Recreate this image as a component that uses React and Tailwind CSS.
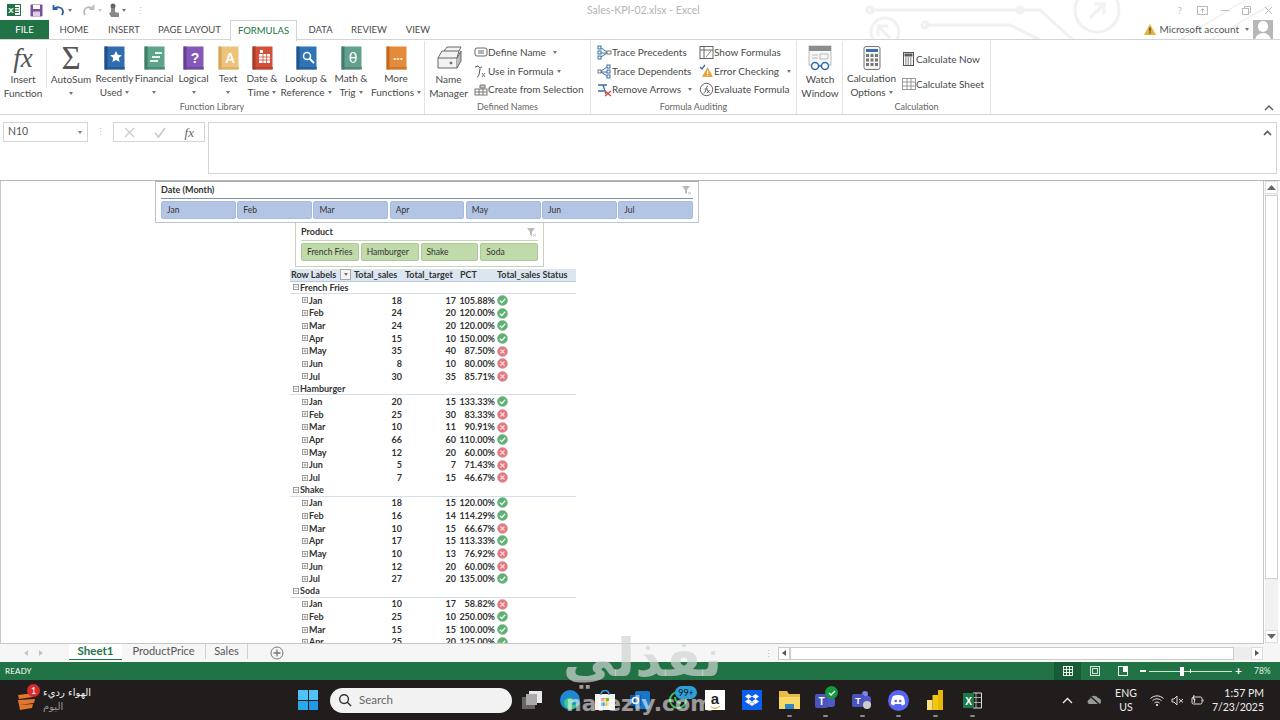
import React from "react";

const SANS = "font-['Lato','Open_Sans',sans-serif]";

function Book({ color, dark, children }) {
  return (
    <svg width="21" height="24" viewBox="0 0 21 24">
      <rect x="0.5" y="0.5" width="20" height="23" fill={color} />
      <rect x="0.5" y="0.5" width="3" height="23" fill={dark} />
      <rect x="3" y="21" width="18" height="2.5" fill={dark} opacity="0.6" />
      {children}
    </svg>
  );
}

function Caret({ className = "" }) {
  return <span className={`inline-block align-middle w-0 h-0 border-l-[2.5px] border-r-[2.5px] border-t-[3px] border-l-transparent border-r-transparent border-t-[#777] ${className}`} />;
}

function BigBtn({ w, icon, l1, l2, caret, caretOnly }) {
  return (
    <div className={`flex flex-col items-center shrink-0 ${w}`}>
      <div className="h-[26px] mt-[4px] flex items-end justify-center">{icon}</div>
      <div className="mt-[2px] text-[10px] leading-[13.5px] text-[#4a4a4a] whitespace-nowrap text-center">{l1}</div>
      <div className="text-[10px] leading-[13.5px] text-[#4a4a4a] whitespace-nowrap text-center">
        {l2}
        {caret && <Caret className={caretOnly ? "" : "ml-[3px]"} />}
      </div>
    </div>
  );
}

function Small({ icon, text, caret, gap = "ml-0", caretGap = "ml-[5px]" }) {
  return (
    <div className="flex items-center h-[18.7px] text-[10px] text-[#4a4a4a] whitespace-nowrap">
      <span className="w-[15px] h-[15px] flex items-center justify-center shrink-0">{icon}</span>
      <span className={gap}>{text}</span>
      {caret && <Caret className={caretGap} />}
    </div>
  );
}

function Group({ w, label, children, sep = true }) {
  return (
    <div className={`relative h-full shrink-0 flex flex-col ${w} ${sep ? "border-r border-[#e3e3e3]" : ""}`}>
      <div className="flex-1 flex min-h-0">{children}</div>
      <div className="h-[15px] text-center text-[9px] leading-[16px] text-[#666]">{label}</div>
    </div>
  );
}

const I = {
  def: <svg width="14" height="12" viewBox="0 0 14 12" fill="none" stroke="#666"><rect x="1" y="2" width="12" height="8" rx="2"/><path d="M4 5h6M4 7h6"/></svg>,
  use: <svg width="15" height="15" viewBox="0 0 15 15" fill="none" stroke="#555"><path d="M2 3l3-1 2 2M9 3c-2 0-2 2-2.500 5S5.500 13 4 13" /><path d="M9 9l3 4M12 9l-3 4" stroke="#777"/></svg>,
  cre: <svg width="14" height="14" viewBox="0 0 14 14" fill="none" stroke="#777"><rect x="1" y="6" width="12" height="6"/><path d="M1 9h12M5 6v6M9 6v6"/><path d="M6 2h5v3H6z" fill="#ccc"/></svg>,
  prec: <svg width="15" height="15" viewBox="0 0 15 15" fill="none" stroke="#3a6ea5"><rect x="1" y="1" width="3" height="3"/><rect x="1" y="6" width="3" height="3"/><rect x="1" y="11" width="3" height="3"/><path d="M4 3l6 4M4 8h6M4 12l6-4"/><rect x="10" y="6" width="4" height="3" stroke="#777"/></svg>,
  dep: <svg width="15" height="15" viewBox="0 0 15 15" fill="none" stroke="#3a6ea5"><rect x="1" y="6" width="3" height="3" stroke="#777"/><path d="M4 7l6-4M4 8h6M4 8l6 4"/><rect x="10" y="1" width="3" height="3"/><rect x="10" y="6" width="3" height="3"/><rect x="10" y="11" width="3" height="3"/></svg>,
  rem: <svg width="15" height="15" viewBox="0 0 15 15" fill="none"><path d="M1 3h9M6 3l3 9M1 9h6" stroke="#3a6ea5" strokeWidth="1.300"/><path d="M8 9l6 5M14 9l-6 5" stroke="#d24a3a" strokeWidth="1.300"/></svg>,
  show: <svg width="15" height="15" viewBox="0 0 15 15" fill="none" stroke="#666"><rect x="1" y="1.500" width="13" height="12"/><path d="M1 5h13M5 2v11"/><path d="M7 12l5-6" stroke="#888"/></svg>,
  err: <svg width="15" height="15" viewBox="0 0 15 15"><path d="M1 3l2 2 3-4" fill="none" stroke="#3a6ea5" strokeWidth="1.300"/><path d="M8.500 3l5.500 10H3z" fill="#e8a33a"/><rect x="8" y="6.500" width="1.200" height="3.500" fill="#fff"/><rect x="8" y="10.800" width="1.200" height="1.200" fill="#fff"/></svg>,
  ev: <svg width="15" height="15" viewBox="0 0 15 15" fill="none" stroke="#666"><circle cx="7.500" cy="7.500" r="6.200"/><path d="M9 4c-2 0-1.500 3-2.500 5S5 11 4.500 11M5.500 7h3.500M8 8l2.500 3M10.500 8L8 11"/></svg>,
  now: <svg width="13" height="14" viewBox="0 0 13 14" fill="none" stroke="#555"><rect x="1.500" y="0.500" width="10" height="13"/><rect x="3" y="2" width="7" height="2" fill="#666"/><path d="M3 6h7M3 8h7M3 10h7M3 12h7" strokeDasharray="1.500 1"/></svg>,
  sheet: <svg width="14" height="13" viewBox="0 0 14 13" fill="none" stroke="#999"><rect x="0.500" y="0.500" width="13" height="11"/><path d="M0.500 4h13M0.500 8h13M5 0.500v11M9 0.500v11"/></svg>,
};

function Ribbon() {
  return (
    <div className={`flex h-[74px] w-full items-stretch pt-[1px] ${SANS}`}>
      <Group w="w-[425px]" label="Function Library">
        <div className="flex w-[46px] shrink-0">
          <BigBtn
            w="w-[46px]"
            l1="Insert"
            l2="Function"
            icon={<span className="font-['Liberation_Serif',serif] italic text-[27px] leading-[26px] text-[#555]">fx</span>}
          />
        </div>
        <div className="w-px h-[40px] mt-[7px] bg-[#e3e3e3] shrink-0" />
        <BigBtn w="w-[48px]" l1="AutoSum" l2="" caret caretOnly icon={<span className="font-['Liberation_Serif',serif] text-[33px] leading-[26px] text-[#555]">Σ</span>} />
        <BigBtn w="w-[39px]" l1="Recently" l2="Used" caret icon={<Book color="#2f6db0" dark="#1f4f85"><path d="M12 5l1.800 3.800 4 .5-3 2.700.8 4-3.600-2-3.600 2 .8-4-3-2.700 4-.5z" fill="#fff" /></Book>} />
        <BigBtn w="w-[40px]" l1="Financial" l2="" caret caretOnly icon={<Book color="#5da48a" dark="#3f7d68"><path d="M6 14h8v2H6zM8 10h8v2H8zM11 6h7v2h-7z" fill="#fff" opacity=".85"/></Book>} />
        <BigBtn w="w-[39px]" l1="Logical" l2="" caret caretOnly icon={<Book color="#8458b8" dark="#653f93"><text x="12" y="17" textAnchor="middle" fontSize="14" fontWeight="700" fill="#fff" fontFamily="Liberation Sans">?</text></Book>} />
        <BigBtn w="w-[30px]" l1="Text" l2="" caret caretOnly icon={<Book color="#edc27a" dark="#d4a557"><text x="12" y="17" textAnchor="middle" fontSize="14" fontWeight="700" fill="#fff" fontFamily="Liberation Sans">A</text></Book>} />
        <BigBtn w="w-[38px]" l1="Date &" l2="Time" caret icon={<Book color="#d2503a" dark="#a83a29"><rect x="7" y="8" width="11" height="9" fill="#fff"/><path d="M7 11h11M7 14h11M11 8v9M14.500 8v9" stroke="#d2503a" strokeWidth=".8"/><rect x="8" y="4" width="3" height="3" fill="#fff"/></Book>} />
        <BigBtn w="w-[50px]" l1="Lookup &" l2="Reference" caret icon={<Book color="#2f74b5" dark="#20568a"><circle cx="11" cy="10" r="3.500" fill="none" stroke="#fff" strokeWidth="1.500"/><path d="M13.500 12.500L18 17" stroke="#fff" strokeWidth="2"/></Book>} />
        <BigBtn w="w-[40px]" l1="Math &" l2="Trig" caret icon={<Book color="#63a08f" dark="#457a6b"><text x="12" y="17" textAnchor="middle" fontSize="14" fill="#fff" fontFamily="DejaVu Sans">θ</text></Book>} />
        <BigBtn w="w-[50px]" l1="More" l2="Functions" caret icon={<Book color="#e58a3a" dark="#bf6a23"><text x="12" y="14" textAnchor="middle" fontSize="12" fontWeight="700" fill="#fff" fontFamily="Liberation Sans">...</text></Book>} />
      </Group>
      <Group w="w-[166px]" label="Defined Names">
        <BigBtn
          w="w-[47px]"
          l1="Name"
          l2="Manager"
          icon={<svg width="26" height="26" viewBox="0 0 26 26" fill="none" stroke="#666"><path d="M2 13h19v10H2zM2 13l4-7h17l-2 7M8 6l3-4h14l-2 4" fill="#f3f3f3"/><path d="M21 13l4-7v10l-4 7" fill="#bbb"/><circle cx="15" cy="18" r="1" fill="#666"/></svg>}
        />
        <div className="flex flex-col pt-[2px] pl-[1px]">
          <Small icon={I.def} text="Define Name" caret caretGap="ml-[7px]" />
          <Small icon={I.use} text="Use in Formula" caret caretGap="ml-[3px]" />
          <Small icon={I.cre} text="Create from Selection" />
        </div>
      </Group>
      <Group w="w-[206px]" label="Formula Auditing">
        <div className="flex flex-col pt-[2px] pl-[6px] w-[108px] shrink-0">
          <Small icon={I.prec} text="Trace Precedents" />
          <Small icon={I.dep} text="Trace Dependents" />
          <Small icon={I.rem} text="Remove Arrows" caret caretGap="ml-[7px]" />
        </div>
        <div className="flex flex-col pt-[2px] w-[98px] shrink-0">
          <Small icon={I.show} text="Show Formulas" />
          <Small icon={I.err} text="Error Checking" caret caretGap="ml-[8px]" />
          <Small icon={I.ev} text="Evaluate Formula" />
        </div>
      </Group>
      <Group w="w-[46px]" label="">
        <BigBtn
          w="w-[46px]"
          l1="Watch"
          l2="Window"
          icon={<svg width="26" height="26" viewBox="0 0 26 26" fill="none"><rect x="2" y="1" width="22" height="19" fill="#f7f7f7" stroke="#bbb"/><rect x="2" y="1" width="22" height="5" fill="#8c8c8c"/><path d="M5 10h6M5 13h6M13 9h8v5h-8z" stroke="#bbb"/><circle cx="8" cy="21" r="3.500" fill="#fff" stroke="#2f6db0" strokeWidth="1.500"/><circle cx="18" cy="21" r="3.500" fill="#fff" stroke="#2f6db0" strokeWidth="1.500"/><path d="M11.500 21h3" stroke="#2f6db0" strokeWidth="1.500"/></svg>}
        />
      </Group>
      <Group w="w-[148px]" label="Calculation">
        <BigBtn
          w="w-[57px]"
          l1="Calculation"
          l2="Options"
          caret
          icon={<svg width="18" height="24" viewBox="0 0 18 24"><rect x="1" y="0.500" width="16" height="23" rx="2" fill="#f4f4f4" stroke="#777"/><rect x="3" y="3" width="12" height="3" fill="#3f6fb0"/><path d="M3 8h3v3H3zM7.500 8h3v3h-3zM12 8h3v3h-3zM3 12.500h3v3H3zM7.500 12.500h3v3h-3zM12 12.500h3v3h-3zM3 17h3v3H3zM7.500 17h3v3h-3zM12 17h3v3h-3z" fill="#777"/></svg>}
        />
        <div className="flex flex-col pt-[9px] pl-[1px]">
          <div className="h-[25px]"><Small icon={I.now} text="Calculate Now" /></div>
          <Small icon={I.sheet} text="Calculate Sheet" />
        </div>
      </Group>
      <div className="flex-1 flex items-end justify-end pr-[6px] pb-[3px]">
        <svg width="10" height="6" viewBox="0 0 10 6" fill="none" stroke="#555" strokeWidth="1.300"><path d="M1 5l4-4 4 4" /></svg>
      </div>
    </div>
  );
}

const sales = [
  ["French Fries", [["Jan",18,17,"105.88%",1],["Feb",24,20,"120.00%",1],["Mar",24,20,"120.00%",1],["Apr",15,10,"150.00%",1],["May",35,40,"87.50%",0],["Jun",8,10,"80.00%",0],["Jul",30,35,"85.71%",0]]],
  ["Hamburger", [["Jan",20,15,"133.33%",1],["Feb",25,30,"83.33%",0],["Mar",10,11,"90.91%",0],["Apr",66,60,"110.00%",1],["May",12,20,"60.00%",0],["Jun",5,7,"71.43%",0],["Jul",7,15,"46.67%",0]]],
  ["Shake", [["Jan",18,15,"120.00%",1],["Feb",16,14,"114.29%",1],["Mar",10,15,"66.67%",0],["Apr",17,15,"113.33%",1],["May",10,13,"76.92%",0],["Jun",12,20,"60.00%",0],["Jul",27,20,"135.00%",1]]],
  ["Soda", [["Jan",10,17,"58.82%",0],["Feb",25,10,"250.00%",1],["Mar",15,15,"100.00%",1],["Apr",25,20,"125.00%",1]]],
];

function Expander({ minus }) {
  return (
    <svg width="6" height="6" viewBox="0 0 6 6" className="shrink-0" fill="none" stroke="#888" strokeWidth=".8">
      <rect x=".4" y=".4" width="5.200" height="5.200" />
      <path d="M1.500 3h3" />
      {!minus && <path d="M3 1.500v3" />}
    </svg>
  );
}

function Status({ ok }) {
  return ok ? (
    <svg width="11" height="11" viewBox="0 0 11 11" className="ml-[2px] shrink-0">
      <circle cx="5.500" cy="5.500" r="5" fill="#5cb270" stroke="#7fa98a" strokeWidth=".5" />
      <path d="M2.800 5.600l2 2 3.400-3.800" fill="none" stroke="#fff" strokeWidth="1.300" />
    </svg>
  ) : (
    <svg width="11" height="11" viewBox="0 0 11 11" className="ml-[2px] shrink-0">
      <circle cx="5.500" cy="5.500" r="5" fill="#e4777f" stroke="#c9989b" strokeWidth=".5" />
      <path d="M3.500 3.500l4 4M7.500 3.500l-4 4" fill="none" stroke="#f8dcdc" strokeWidth="1.200" />
    </svg>
  );
}

function Slicer({ title, titleLine, items, itemCls, cols }) {
  return (
    <div>
      <div className={`flex items-center justify-between h-[17px] border-b ${titleLine} mx-[5px]`}>
        <span className="text-[9px] font-bold text-[#333]">{title}</span>
        <svg width="10" height="10" viewBox="0 0 10 10" className="mr-[1px]">
          <path d="M0 1h8L5 5v4L3 8V5z" fill="#bbb" />
          <path d="M6 7l3 2.500M9 7L6 9.500" stroke="#ccc" fill="none" />
        </svg>
      </div>
      <div className={`grid ${cols} mx-[5px] mt-[2px]`}>
        {items.map((t) => (
          <div key={t} className={`h-[18px] rounded-[2px] border text-[8.500px] leading-[16px] pl-[5px] text-[#333] ${itemCls}`}>{t}</div>
        ))}
      </div>
    </div>
  );
}

function Sheet() {
  return (
    <div className="flex h-[464px] border-t border-[#b5b5b5] overflow-hidden font-['Lato','Open_Sans',sans-serif]">
      <div className="flex-1 border-l border-r border-b border-[#c6c6c6] overflow-hidden">
        <div className="ml-[154px] w-[544px] h-[42px] border border-[#b9c4d4] border-t-[#aab] bg-white">
          <Slicer
            title="Date (Month)"
            titleLine="border-[#7f92ad]"
            items={["Jan","Feb","Mar","Apr","May","Jun","Jul"]}
            itemCls="bg-[#b3c5e4] border-[#a8bbdc]"
            cols="grid-cols-7 gap-x-[1.500px]"
          />
        </div>
        <div className="ml-[294px] w-[249px] h-[44px] border border-t-0 border-[#c8d3b5] bg-white pt-[1px]">
          <Slicer
            title="Product"
            titleLine="border-[#c9d6b6]"
            items={["French Fries","Hamburger","Shake","Soda"]}
            itemCls="bg-[#c0daa9] border-[#adc99a]"
            cols="grid-cols-4 gap-x-[2px]"
          />
        </div>
        <div className="ml-[289px] w-[286px] mt-[1.500px] text-[9px] font-bold text-[#333]">
          <div className="flex items-center h-[13px] bg-[#dce6f1] border-b border-[#b7c9e0] whitespace-nowrap">
            <span className="w-[50px] pl-[1px]">Row Labels</span>
            <span className="w-[11px] h-[11px] bg-[#f4f4f4] border border-[#aaa] flex items-center justify-center"><Caret /></span>
            <span className="w-[54px] pl-[3px]">Total_sales</span>
            <span className="w-[54px] pl-[0px]">Total_target</span>
            <span className="w-[38px] pl-[1px]">PCT</span>
            <span>Total_sales Status</span>
          </div>
          {sales.map(([name, rows]) => (
            <div key={name}>
              <div className="flex items-center h-[12.670px] border-b border-[#d5dfeb] pl-[3px] gap-[1px]">
                <Expander minus />
                <span>{name}</span>
              </div>
              {rows.map(([m, a, b, p, ok]) => (
                <div key={m} className="flex items-center h-[12.670px]">
                  <div className="w-[61px] pl-[12px] flex items-center gap-[1px] shrink-0"><Expander /><span>{m}</span></div>
                  <span className="w-[51px] text-right shrink-0">{a}</span>
                  <span className="w-[54px] text-right shrink-0">{b}</span>
                  <span className="w-[39px] text-right shrink-0">{p}</span>
                  <Status ok={ok} />
                </div>
              ))}
            </div>
          ))}
        </div>
      </div>
      <div className="w-[16px] shrink-0 flex flex-col bg-white pl-[1px]">
        <div className="w-[13px] flex-1 flex flex-col bg-[#f1f1f1]">
          <div className="h-[13px] bg-white border border-[#e0e0e0] flex items-center justify-center shrink-0">
            <svg width="9" height="5" viewBox="0 0 9 5"><path d="M4.500 0L9 5H0z" fill="#666" /></svg>
          </div>
          <div className="h-[384px] mt-px bg-white border border-[#cfcfcf] shrink-0" />
          <div className="flex-1" />
          <div className="h-[13px] mb-px bg-white border border-[#e0e0e0] flex items-center justify-center shrink-0">
            <svg width="9" height="5" viewBox="0 0 9 5"><path d="M4.500 5L9 0H0z" fill="#666" /></svg>
          </div>
        </div>
      </div>
    </div>
  );
}

function TabBar() {
  return (
    <div className={`flex items-stretch h-[18px] bg-[#f6f6f6] ${SANS}`}>
      <div className="w-[69px] flex items-center justify-center gap-[11px] shrink-0 pr-[2px]">
        <svg width="4" height="6" viewBox="0 0 4 6"><path d="M4 0v6L0 3z" fill="#c4c4c4" /></svg>
        <svg width="4" height="6" viewBox="0 0 4 6"><path d="M0 0v6l4-3z" fill="#c4c4c4" /></svg>
      </div>
      <div className="w-[53px] h-[16px] text-center text-[11.500px] font-bold leading-[13px] text-[#217346] border-b border-[#217346] bg-white shrink-0">Sheet1</div>
      <div className="w-[84px] h-[15px] text-center text-[11px] leading-[13px] text-[#555] border-r border-[#d0d0d0] shrink-0">ProductPrice</div>
      <div className="w-[42px] h-[15px] text-center text-[11px] leading-[13px] text-[#555] border-r border-[#d0d0d0] shrink-0">Sales</div>
      <div className="ml-[22px] flex items-center">
        <svg width="14" height="14" viewBox="0 0 14 14" fill="none" stroke="#777"><circle cx="7" cy="7" r="6" /><path d="M7 3.500v7M3.500 7h7" strokeWidth="1.300" /></svg>
      </div>
      <div className="flex-1" />
      <div className="w-[14px] flex items-center justify-start">
        <span className="text-[#bbb] text-[9px] leading-[9px]">⋮</span>
      </div>
      <div className="w-[485px] flex items-center shrink-0 mr-[17px]">
        <div className="w-[12px] h-[13px] border border-[#ccc] bg-white flex items-center justify-center shrink-0">
          <svg width="4" height="6" viewBox="0 0 4 6"><path d="M4 0v6L0 3z" fill="#555" /></svg>
        </div>
        <div className="flex-1 h-[13px] bg-white border border-[#ccc]" />
        <div className="w-[17px] h-[13px] bg-[#ededed] shrink-0" />
        <div className="w-[12px] h-[13px] border border-[#ddd] bg-white flex items-center justify-center shrink-0">
          <svg width="4" height="6" viewBox="0 0 4 6"><path d="M0 0v6l4-3z" fill="#555" /></svg>
        </div>
      </div>
    </div>
  );
}

function StatusBar() {
  return (
    <div className={`flex items-center h-[18px] bg-[#217346] text-white ${SANS}`}>
      <span className="ml-[5px] text-[8px] tracking-[0.2px]">READY</span>
      <div className="flex-1" />
      <div className="w-[27px] h-[18px] bg-[#185c37] flex items-center justify-center">
        <svg width="10" height="10" viewBox="0 0 10 10" fill="none" stroke="#fff" strokeWidth=".9"><rect x=".5" y=".5" width="9" height="9" /><path d="M.5 3.500h9M.5 6.500h9M3.500.5v9M6.500.5v9" /></svg>
      </div>
      <div className="w-[28px] flex items-center justify-center">
        <svg width="10" height="10" viewBox="0 0 10 10" fill="none" stroke="#e6efe9" strokeWidth=".9"><rect x=".5" y=".5" width="9" height="9" /><rect x="2.500" y="2.500" width="5" height="5" /></svg>
      </div>
      <div className="w-[27px] flex items-center justify-center">
        <svg width="10" height="10" viewBox="0 0 10 10"><rect x=".5" y=".5" width="9" height="9" fill="none" stroke="#fff" strokeWidth=".9" /><rect x="5" y="1" width="4" height="5" fill="#fff" /></svg>
      </div>
      <span className="ml-[4px] w-[6px] h-[1.500px] bg-white" />
      <div className="relative w-[83px] h-px bg-[#cfe0d6] ml-[3px]">
        <span className="absolute left-[31px] -top-[4px] w-[4px] h-[9px] bg-white" />
        <span className="absolute left-[41px] -top-[1.500px] w-px h-[4px] bg-white" />
      </div>
      <span className="ml-[3px] text-[12px] leading-[12px] font-bold">+</span>
      <span className="ml-[12px] mr-[6px] w-[20px] text-[8.500px] text-[#dfeee5]">78%</span>
    </div>
  );
}

function TaskIcon({ w = "w-[37px]", children, dash }) {
  return (
    <div className={`relative flex flex-col items-center justify-center h-full shrink-0 ${w}`}>
      {children}
      {dash && <span className="absolute bottom-[3px] w-[5px] h-[2.500px] rounded-[2px] bg-[#888]" />}
    </div>
  );
}

function Taskbar() {
  return (
    <div className={`relative flex items-center h-[40px] bg-[#211d1d] text-white overflow-hidden ${SANS}`}>
      <div className="relative ml-[17px] w-[22px] h-[22px] shrink-0">
        <svg width="20" height="22" viewBox="0 0 20 22" className="mt-[1px]">
          <path d="M1 5l16-2-1 4-14 2zM1 10l17-1-1 4-15 2zM2 15l14-1-1 4-12 2z" fill="#e2762c" />
        </svg>
        <span className="absolute -top-[5px] left-[10px] w-[13px] h-[13px] rounded-full bg-[#d62c2c] text-[9px] leading-[13px] text-center">1</span>
      </div>
      <div className="ml-[4px] w-[50px] text-[10px] leading-[14px] font-['DejaVu_Sans',sans-serif] shrink-0" dir="rtl">
        <div className="text-[#eee] text-left whitespace-nowrap">الهواء رديء</div>
        <div className="text-[#999] text-left">اليوم</div>
      </div>
      <div className="ml-[205px] w-[20px] h-[20px] grid grid-cols-2 gap-[1px] shrink-0">
        <span className="bg-[#4fc3f7]" /><span className="bg-[#4fc3f7]" /><span className="bg-[#29a8ec]" /><span className="bg-[#1e9be6]" />
      </div>
      <div className="ml-[12px] w-[182px] h-[25px] rounded-full bg-[#f2f2f2] flex items-center pl-[8px] shrink-0">
        <svg width="14" height="14" viewBox="0 0 15 15" fill="none" stroke="#333" strokeWidth="1.500"><circle cx="6.500" cy="6.500" r="4.700" /><path d="M10 10l4 4" /></svg>
        <span className="ml-[7px] text-[11.500px] text-[#666]">Search</span>
      </div>
      <TaskIcon w="w-[20px] ml-[10px]">
        <svg width="20" height="18" viewBox="0 0 20 18"><rect x="0" y="6" width="13" height="12" fill="#666" /><rect x="7" y="0" width="13" height="12" fill="#e8e8e8" /><rect x="4" y="3" width="11" height="11" fill="#aaa" /></svg>
      </TaskIcon>
      <TaskIcon w="w-[36px] ml-[10px]">
        <svg width="22" height="22" viewBox="0 0 22 22"><circle cx="11" cy="11" r="10" fill="#1e88d2" /><path d="M5 14c0-5 8-7 10-3 1 2-2 3-4 3 2 3 7 2 9-1-1 5-6 8-10 7-3-1-5-3-5-6z" fill="#3ec77a" /></svg>
      </TaskIcon>
      <TaskIcon w="w-[34px]">
        <svg width="20" height="20" viewBox="0 0 20 20"><rect x="0" y="4" width="20" height="16" fill="#f1f1f1" /><path d="M6 5c0-6 8-6 8 0" fill="none" stroke="#3aa0d8" strokeWidth="1.500" /><rect x="6" y="8" width="3.500" height="3.500" fill="#f25022" /><rect x="10.500" y="8" width="3.500" height="3.500" fill="#7fba00" /><rect x="6" y="12.500" width="3.500" height="3.500" fill="#00a4ef" /><rect x="10.500" y="12.500" width="3.500" height="3.500" fill="#ffb900" /></svg>
      </TaskIcon>
      <TaskIcon w="w-[36px]">
        <svg width="20" height="20" viewBox="0 0 20 20"><rect x="5" y="1" width="15" height="18" rx="2" fill="#1777c9" /><rect x="0" y="5" width="11" height="11" fill="#0a5aa8" /><circle cx="5.500" cy="10.500" r="3" fill="none" stroke="#fff" strokeWidth="1.500" /></svg>
      </TaskIcon>
      <TaskIcon w="w-[40px]">
        <svg width="20" height="20" viewBox="0 0 20 20" fill="none"><circle cx="10" cy="10" r="8" stroke="#2fc45b" strokeWidth="2" /><path d="M7 7c0 4 3 6 6 6" stroke="#2fc45b" strokeWidth="2" /></svg>
        <span className="absolute top-[6px] left-[17px] w-[22px] h-[13px] rounded-full bg-[#2f9fd8] text-[9px] leading-[13px] text-center text-[#111]">99+</span>
      </TaskIcon>
      <TaskIcon w="w-[34px]">
        <div className="w-[20px] h-[20px] bg-white flex flex-col items-center justify-center">
          <span className="font-['Liberation_Sans',sans-serif] text-[15px] leading-[14px] font-bold text-[#222]">a</span>
          <svg width="12" height="3" viewBox="0 0 12 3"><path d="M1 0c3 3 7 3 10 0" fill="none" stroke="#f09000" /></svg>
        </div>
      </TaskIcon>
      <TaskIcon w="w-[40px]">
        <div className="w-[20px] h-[20px] bg-[#0d5ff0] flex items-center justify-center">
          <svg width="14" height="12" viewBox="0 0 14 12" fill="#fff"><path d="M3.500 0L7 2.500 3.500 5 0 2.500zM10.500 0L14 2.500 10.500 5 7 2.500zM3.500 5L7 7.500 3.500 10 0 7.500zM10.500 5L14 7.500 10.500 10 7 7.500zM7 8l3 2-3 2-3-2z" /></svg>
        </div>
      </TaskIcon>
      <TaskIcon w="w-[34px]" dash>
        <svg width="21" height="20" viewBox="0 0 21 20"><path d="M0 1h8l2 3h11v15H0z" fill="#e9b949" /><rect x="0" y="7" width="21" height="12" fill="#f8d866" /><rect x="6" y="14" width="9" height="5" fill="#2f87c8" /></svg>
      </TaskIcon>
      <TaskIcon w="w-[38px]" dash>
        <div className="relative">
          <svg width="22" height="20" viewBox="0 0 22 20"><circle cx="15" cy="5" r="3" fill="#7b83eb" /><rect x="10" y="7" width="11" height="10" rx="3" fill="#5059c9" /><rect x="1" y="4" width="13" height="14" rx="2" fill="#4b53bc" /><text x="7.500" y="15" textAnchor="middle" fontSize="10" fontWeight="700" fill="#fff" fontFamily="Liberation Sans">T</text></svg>
          <span className="absolute -top-[4px] left-[11px] w-[13px] h-[13px] rounded-full bg-[#139a3c] flex items-center justify-center">
            <svg width="8" height="6" viewBox="0 0 8 6" fill="none" stroke="#fff" strokeWidth="1.300"><path d="M1 3l2 2 4-4" /></svg>
          </span>
        </div>
      </TaskIcon>
      <TaskIcon w="w-[36px]" dash>
        <svg width="20" height="20" viewBox="0 0 20 20"><circle cx="13" cy="4" r="3" fill="#7b83eb" /><rect x="8" y="6" width="11" height="10" rx="3" fill="#5059c9" /><rect x="0" y="4" width="12" height="13" rx="2" fill="#4b53bc" /><text x="6" y="14" textAnchor="middle" fontSize="9" fontWeight="700" fill="#fff" fontFamily="Liberation Sans">T</text><circle cx="15" cy="15" r="4" fill="#ccc" /></svg>
      </TaskIcon>
      <TaskIcon w="w-[36px]" dash>
        <div className="w-[21px] h-[21px] rounded-full bg-[#5865f2] flex items-center justify-center">
          <svg width="14" height="11" viewBox="0 0 14 11"><path d="M2 1c3-1.300 7-1.300 10 0 1.500 2.500 2 5 2 8-1 .8-2 1.300-3 1.600l-1-1.500H4l-1 1.500C2 10.300 1 9.800 0 9c0-3 .5-5.500 2-8z" fill="#fff" /><circle cx="4.700" cy="6" r="1.300" fill="#5865f2" /><circle cx="9.300" cy="6" r="1.300" fill="#5865f2" /></svg>
        </div>
      </TaskIcon>
      <TaskIcon w="w-[38px]" dash>
        <svg width="16" height="20" viewBox="0 0 16 20"><rect x="11" y="0" width="5" height="20" fill="#e8b800" /><rect x="5.500" y="5" width="5.500" height="15" fill="#f2c811" /><rect x="0" y="10" width="5.500" height="10" fill="#fbe27a" /></svg>
      </TaskIcon>
      <TaskIcon w="w-[36px]" dash>
        <svg width="19" height="17" viewBox="0 0 19 17"><path d="M10 1h8.500v15H10z" fill="none" stroke="#ddd" /><path d="M13 1v15M10 5.500h8.500M10 10.500h8.500" stroke="#ddd" strokeWidth=".7" /><rect x="0" y="1" width="11" height="15" fill="#1a7a48" /><text x="5.500" y="12.500" textAnchor="middle" fontSize="10" fontWeight="700" fill="#fff" fontFamily="Liberation Sans">X</text></svg>
      </TaskIcon>
      <div className="flex-1" />
      <svg width="11" height="7" viewBox="0 0 11 7" fill="none" stroke="#eee" strokeWidth="1.300"><path d="M1 6l4.500-4.500L10 6" /></svg>
      <svg width="15" height="12" viewBox="0 0 15 12" className="ml-[14px]"><path d="M2 10c-2-1-2-4 1-5 1-4 6-4 8-1 3 0 4 4 2 6z" fill="#999" /><path d="M2 1l11 10" stroke="#222" strokeWidth="1.500" /></svg>
      <div className="ml-[8.500px] w-[32px] text-center text-[10.500px] leading-[14px] text-[#eee]">ENG<br />US</div>
      <svg width="14" height="11" viewBox="0 0 14 11" fill="none" stroke="#eee" className="ml-[8px]"><path d="M.5 3.500c4-3.500 9-3.500 13 0M2.500 5.700c3-2.500 6-2.500 9 0M4.500 8c1.500-1.300 3.500-1.300 5 0" /><circle cx="7" cy="10" r=".7" fill="#eee" /></svg>
      <svg width="13" height="11" viewBox="0 0 13 11" fill="none" stroke="#ddd" className="ml-[6.500px]"><path d="M1 4h2l3-3v9L3 7H1z" /><path d="M8 4l4 3.500M12 4L8 7.500" /></svg>
      <svg width="13" height="11" viewBox="0 0 13 11" fill="none" stroke="#ddd" className="ml-[7px]"><rect x="1" y="2" width="10" height="7" rx="1.500" /><path d="M12 4.500v2" /><path d="M3 0l-1 4h2l-1 4" fill="#ddd" /></svg>
      <div className="ml-[2.500px] mr-[16px] w-[58px] text-right text-[10.500px] leading-[14px] text-[#eee] whitespace-nowrap">1:57 PM<br />7/23/2025</div>
      <span className="absolute left-[566px] top-[10px] text-[22px] leading-[28px] font-['DejaVu_Sans',sans-serif] font-bold text-white/55 whitespace-nowrap">nafezly.com</span>
    </div>
  );
}

export default function App() {
  return (
    <div className="relative w-[1280px] h-[720px] bg-white overflow-hidden">
      <svg width="430" height="40" viewBox="0 0 430 40" className="absolute right-0 top-0" fill="none" stroke="#f1f1f1" strokeWidth="3">
        <path d="M20 10h150l20 0 33 30M75 25h85l30 15" />
        <circle cx="20" cy="10" r="3" />
        <circle cx="75" cy="25" r="3" />
        <circle cx="170" cy="10" r="3" />
        <circle cx="35" cy="32" r="14" />
        <circle cx="247" cy="10" r="22" />
        <path d="M240 18l14-14M244 4h10v10M28 26l12 12M28 36V26h10" />
        <path d="M330 40l65-40M360 40l60-35" strokeWidth="1.500" />
      </svg>
      <div className="relative flex flex-col h-full">
        <div className={`relative flex items-center justify-between h-[20px] ${SANS}`}>
          <div className="flex items-center pl-[7px]">
            <svg width="14" height="14" viewBox="0 0 14 14"><rect x="6" y="1.500" width="7.500" height="11" fill="#fff" stroke="#217346" /><path d="M8 4.500h4M8 7h4M8 9.500h4" stroke="#217346" /><rect x="0" y="1" width="8" height="12" fill="#217346" /><text x="4" y="10" textAnchor="middle" fontSize="8" fontWeight="700" fill="#fff" fontFamily="Liberation Sans">X</text></svg>
            <svg width="13" height="13" viewBox="0 0 13 13" className="ml-[9px]"><rect x=".5" y=".5" width="12" height="12" rx="1" fill="#7a4f9f" /><rect x="3" y="1" width="7" height="4" fill="#fff" /><rect x="3" y="7.500" width="7" height="5" fill="#d9d0e3" /></svg>
            <svg width="13" height="12" viewBox="0 0 13 12" fill="none" stroke="#2a5f9e" strokeWidth="1.800" className="ml-[9px]"><path d="M1.500 1v4h4M2 5c3-3 9-2 9 3 0 1-.5 2-1 3" /></svg>
            <Caret className="ml-[3px]" />
            <svg width="13" height="12" viewBox="0 0 13 12" fill="none" stroke="#bbb" strokeWidth="1.800" className="ml-[10px]"><path d="M11.500 1v4h-4M11 5C8 2 2 3 2 8c0 1 .5 2 1 3" /></svg>
            <Caret className="ml-[3px] opacity-40" />
            <svg width="12" height="15" viewBox="0 0 12 15" className="ml-[6px]"><circle cx="5" cy="3" r="2.500" fill="#666" /><path d="M3 5h4v4l4 1v4H3L1 10l2-1z" fill="#888" /></svg>
            <Caret className="ml-[2px]" />
            <span className="ml-[10px] text-[9px] leading-[9px] text-[#bbb]">⋮</span>
          </div>
          <div className="absolute left-[587px] top-[2px] text-[10.500px] leading-[16px] text-[#b5b5b5] whitespace-nowrap">Sales-KPI-02.xlsx - Excel</div>
          <div className="flex items-center gap-[13px] pr-[7px] text-[#bbb]">
            <span className="text-[10px] leading-[10px] mr-[2px]">?</span>
            <svg width="11" height="9" viewBox="0 0 11 9" fill="none" stroke="#bbb"><rect x=".5" y=".5" width="10" height="8" /><path d="M5.500 7V3M3.500 4.500l2-2 2 2" /></svg>
            <span className="w-[8px] h-px bg-[#bbb]" />
            <svg width="9" height="9" viewBox="0 0 9 9" fill="none" stroke="#bbb"><rect x=".5" y="2.500" width="6" height="6" /><path d="M2.500 2.500v-2h6v6h-2" /></svg>
            <svg width="9" height="9" viewBox="0 0 9 9" fill="none" stroke="#bbb"><path d="M1 1l7 7M8 1L1 8" /></svg>
          </div>
        </div>
        <div className={`relative flex items-stretch h-[20px] border-b border-[#d4d4d4] text-[9.500px] text-[#4a4a4a] ${SANS}`}>
          <div className="w-[49px] bg-[#217346] text-white text-center leading-[20px]">FILE</div>
          <div className="w-[50px] text-center leading-[20px]">HOME</div>
          <div className="w-[50px] text-center leading-[20px]">INSERT</div>
          <div className="w-[81px] text-center leading-[20px] whitespace-nowrap">PAGE LAYOUT</div>
          <div className="w-[67px] text-center leading-[19px] text-[#217346] bg-white border border-b-0 border-[#d4d4d4] h-[21px] z-10">FORMULAS</div>
          <div className="w-[47px] text-center leading-[20px]">DATA</div>
          <div className="w-[50px] text-center leading-[20px]">REVIEW</div>
          <div className="w-[48px] text-center leading-[20px]">VIEW</div>
          <div className="flex-1" />
          <div className="flex items-center pr-[7px] text-[10px]">
            <svg width="12" height="11" viewBox="0 0 12 11"><path d="M6 0l6 11H0z" fill="#e3b23c" /><rect x="5.400" y="3.500" width="1.200" height="4" fill="#333" /><rect x="5.400" y="8.300" width="1.200" height="1.200" fill="#333" /></svg>
            <span className="ml-[4px] text-[#555]">Microsoft account</span>
            <Caret className="ml-[6px]" />
            <div className="ml-[4px] w-[20px] h-[19px] bg-[#b7b7b7] relative overflow-hidden">
              <span className="absolute left-[5px] top-[1px] w-[10px] h-[11px] rounded-full bg-white" />
              <span className="absolute left-[2px] top-[13px] w-[16px] h-[10px] rounded-t-full bg-white" />
            </div>
          </div>
        </div>
        <Ribbon />
        <div className={`flex h-[66px] border-t border-[#d4d4d4] pt-[7px] ${SANS}`}>
          <div className="ml-[3px] w-[85px] h-[20px] bg-white border border-[#d4d4d4] flex items-center justify-between pl-[4px] pr-[5px] text-[10.500px] text-[#555]">
            N10
            <Caret />
          </div>
          <div className="w-[25px] flex items-center justify-center h-[20px] text-[#bbb] text-[9px]">⋮</div>
          <div className="w-[92px] h-[20px] border border-[#d4d4d4] flex items-center justify-between pl-[10px] pr-[10px] text-[#ccc]">
            <svg width="11" height="11" viewBox="0 0 11 11" fill="none" stroke="#ccc" strokeWidth="1.300"><path d="M1 1l9 9M10 1l-9 9" /></svg>
            <svg width="12" height="11" viewBox="0 0 12 11" fill="none" stroke="#ccc" strokeWidth="1.800"><path d="M1 6l3.500 4L11 1" /></svg>
            <span className="font-['Liberation_Serif',serif] italic text-[13px] leading-[13px] text-[#666]">fx</span>
          </div>
          <div className="ml-[3px] flex-1 h-[52px] mr-[3px] border border-[#d4d4d4] flex justify-end pr-[4px] pt-[7px]">
            <svg width="9" height="6" viewBox="0 0 9 6" fill="none" stroke="#555" strokeWidth="1.600"><path d="M1 5l3.500-3.500L8 5" /></svg>
          </div>
        </div>
        <Sheet />
        <TabBar />
        <StatusBar />
        <Taskbar />
      </div>
      <span className="absolute left-[563px] top-[628px] text-[52px] leading-[60px] font-['DejaVu_Sans',sans-serif] font-bold text-[#cfd4d1]/70 whitespace-nowrap" dir="rtl">نفذلي</span>
    </div>
  );
}
